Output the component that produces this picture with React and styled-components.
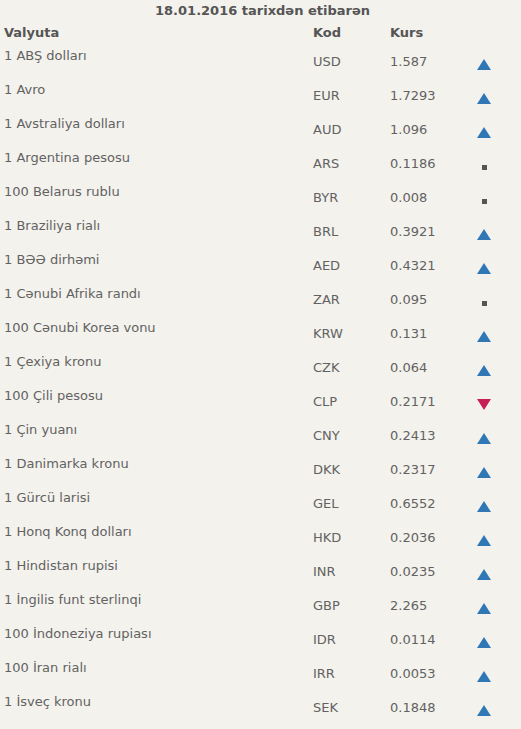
import React from 'react';
import styled, { createGlobalStyle } from 'styled-components';

const GlobalStyle = createGlobalStyle`
    html, body {
        margin : 0 ;
        padding : 0 ;
        background : #f4f2ed ;
    }
    body {
        font-family : 'DejaVu Sans', Verdana, sans-serif ;
        font-size : 13px ;
        color : #626262 ;
    }
`;

const Page = styled.div`
    width : 521px ;
    min-height : 729px ;
    background : #f4f2ed ;
`;

const Title = styled.div`
    height : 22px ;
    line-height : 22px ;
    text-align : center ;
    font-weight : bold ;
    color : #555 ;
    padding-left : 4px ;
`;

const Grid = styled.div`
    display : grid ;
    grid-template-columns : 309px 77px 80px 1fr ;
    padding-left : 4px ;
`;

const Head = styled.div`
    height : 22px ;
    line-height : 22px ;
    font-weight : bold ;
    color : #555 ;
`;

const Cell = styled.div`
    height : 34px ;
    box-sizing : border-box ;
    padding-top : ${p => p.$offset}px ;
    line-height : 16px ;
    white-space : nowrap ;
`;

const IconCell = styled.div`
    height : 34px ;
    box-sizing : border-box ;
    padding-top : 15px ;
    padding-left : 7px ;
    display : flex ;
    align-items : flex-start ;
`;

const Square = styled.span`
    display : block ;
    width : 5px ;
    height : 5px ;
    background : #555 ;
    margin : 4px 0 0 5px ;
`;

const Trend = ({ dir }) => {
    if (dir === 0) return <Square />;
    if (dir > 0) {
        return (
            <svg width="14" height="11" viewBox="0 0 14 11">
                <polygon points="7,0 14,11 0,11" fill="#2f78b5" />
            </svg>
        );
    }
    return (
        <svg width="14" height="11" viewBox="0 0 14 11">
            <polygon points="0,0 14,0 7,11" fill="#c61f55" />
        </svg>
    );
};

const rows = [
    ['1 ABŞ dolları', 'USD', '1.587', 1],
    ['1 Avro', 'EUR', '1.7293', 1],
    ['1 Avstraliya dolları', 'AUD', '1.096', 1],
    ['1 Argentina pesosu', 'ARS', '0.1186', 0],
    ['100 Belarus rublu', 'BYR', '0.008', 0],
    ['1 Braziliya rialı', 'BRL', '0.3921', 1],
    ['1 BƏƏ dirhəmi', 'AED', '0.4321', 1],
    ['1 Cənubi Afrika randı', 'ZAR', '0.095', 0],
    ['100 Cənubi Korea vonu', 'KRW', '0.131', 1],
    ['1 Çexiya kronu', 'CZK', '0.064', 1],
    ['100 Çili pesosu', 'CLP', '0.2171', -1],
    ['1 Çin yuanı', 'CNY', '0.2413', 1],
    ['1 Danimarka kronu', 'DKK', '0.2317', 1],
    ['1 Gürcü larisi', 'GEL', '0.6552', 1],
    ['1 Honq Konq dolları', 'HKD', '0.2036', 1],
    ['1 Hindistan rupisi', 'INR', '0.0235', 1],
    ['1 İngilis funt sterlinqi', 'GBP', '2.265', 1],
    ['100 İndoneziya rupiası', 'IDR', '0.0114', 1],
    ['100 İran rialı', 'IRR', '0.0053', 1],
    ['1 İsveç kronu', 'SEK', '0.1848', 1],
];

const App = () => (
    <Page>
        <GlobalStyle />
        <Title>18.01.2016 tarixdən etibarən</Title>
        <Grid>
            <Head>Valyuta</Head>
            <Head>Kod</Head>
            <Head>Kurs</Head>
            <Head />
            {rows.map(([name, code, rate, dir]) => (
                <React.Fragment key={code}>
                    <Cell $offset={4}>{name}</Cell>
                    <Cell $offset={10}>{code}</Cell>
                    <Cell $offset={10}>{rate}</Cell>
                    <IconCell><Trend dir={dir} /></IconCell>
                </React.Fragment>
            ))}
        </Grid>
    </Page>
);

export default App;
